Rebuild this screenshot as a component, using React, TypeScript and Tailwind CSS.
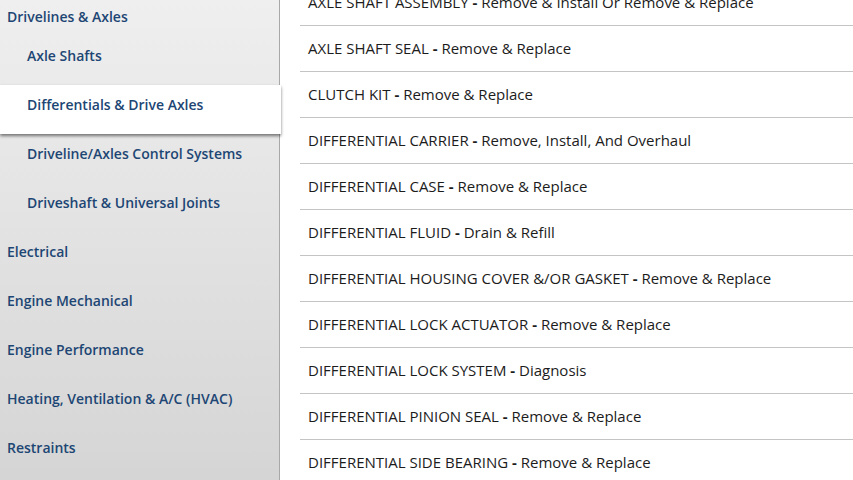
const nav = [
  { label: "Drivelines & Axles", level: 0, first: true },
  { label: "Axle Shafts", level: 1 },
  { label: "Differentials & Drive Axles", level: 1, active: true },
  { label: "Driveline/Axles Control Systems", level: 1 },
  { label: "Driveshaft & Universal Joints", level: 1 },
  { label: "Electrical", level: 0 },
  { label: "Engine Mechanical", level: 0 },
  { label: "Engine Performance", level: 0 },
  { label: "Heating, Ventilation & A/C (HVAC)", level: 0 },
  { label: "Restraints", level: 0 },
];

const procedures = [
  ["AXLE SHAFT ASSEMBLY", "Remove & Install Or Remove & Replace"],
  ["AXLE SHAFT SEAL", "Remove & Replace"],
  ["CLUTCH KIT", "Remove & Replace"],
  ["DIFFERENTIAL CARRIER", "Remove, Install, And Overhaul"],
  ["DIFFERENTIAL CASE", "Remove & Replace"],
  ["DIFFERENTIAL FLUID", "Drain & Refill"],
  ["DIFFERENTIAL HOUSING COVER &/OR GASKET", "Remove & Replace"],
  ["DIFFERENTIAL LOCK ACTUATOR", "Remove & Replace"],
  ["DIFFERENTIAL LOCK SYSTEM", "Diagnosis"],
  ["DIFFERENTIAL PINION SEAL", "Remove & Replace"],
  ["DIFFERENTIAL SIDE BEARING", "Remove & Replace"],
];

export default function App() {
  return (
    <div
      className="flex h-[480px] w-[853px] overflow-hidden bg-white"
      style={{ fontFamily: '"Open Sans", "Noto Sans", sans-serif' }}
    >
      {/* Sidebar */}
      <div className="w-[280px] shrink-0 border-r border-[#a8a8a8] bg-gradient-to-b from-[#efefef] to-[#d5d5d5]">
        <div className="-mt-[3px]">
          {nav.map((item) => (
            <div
              key={item.label}
              className={`${item.first ? "h-[39px]" : "h-[49px]"} pt-[11px] text-[14px] leading-[18px] font-semibold text-[#1d4674] ${
                item.level === 1 ? "pl-[27px]" : "pl-[7px]"
              } ${item.active ? "relative -mr-[2px] bg-white shadow-[0_2px_3px_rgba(0,0,0,0.5)]" : ""}`}
            >
              {item.label}
            </div>
          ))}
        </div>
      </div>

      {/* Procedures */}
      <div className="flex-1 pl-[20px]">
        <div className="-mt-[20px]">
          {procedures.map(([name, action]) => (
            <div
              key={name}
              className="flex h-[46px] items-center whitespace-pre border-b border-[#c4c4c4] pl-[8px] text-[15px] text-[#1c1c1c]"
            >
              <span>
                {name + " "}
                <span className="font-bold">-</span>
                {" " + action}
              </span>
            </div>
          ))}
        </div>
      </div>
    </div>
  );
}
